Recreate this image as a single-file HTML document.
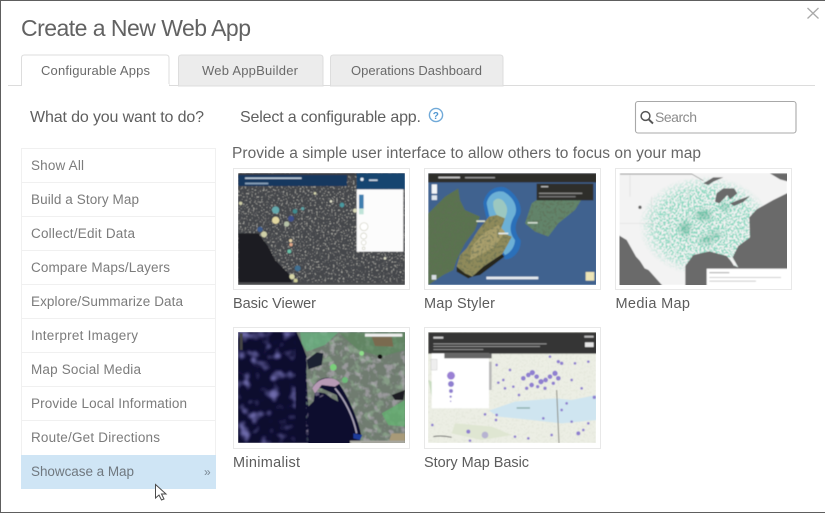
<!DOCTYPE html>
<html><head><meta charset="utf-8"><title>Create a New Web App</title>
<style>
html,body{margin:0;padding:0;background:#fff;width:825px;height:513px;overflow:hidden}
svg{display:block}
text{font-family:"Liberation Sans",sans-serif;fill:#6a6a6a}
</style></head><body>
<svg width="825" height="513" viewBox="0 0 825 513" xmlns="http://www.w3.org/2000/svg">
<defs>
<filter id="b" x="0" y="0" width="100%" height="100%"><feGaussianBlur stdDeviation=".6"/></filter>
<filter id="b3" x="-30%" y="-30%" width="160%" height="160%"><feGaussianBlur stdDeviation="9"/></filter>
<filter id="t" x="-2%" y="-2%" width="104%" height="104%"><feGaussianBlur stdDeviation=".22"/></filter>
<filter id="spkCream" x="0" y="0" width="100%" height="100%"><feTurbulence type="fractalNoise" baseFrequency=".6" numOctaves="2" seed="4"/><feColorMatrix values="0 0 0 0 .8 0 0 0 0 .78 0 0 0 0 .68 10 0 0 0 -6"/></filter>
<filter id="spkGreen" x="0" y="0" width="100%" height="100%"><feTurbulence type="fractalNoise" baseFrequency=".5" numOctaves="2" seed="9"/><feColorMatrix values="0 0 0 0 .25 0 0 0 0 .68 0 0 0 0 .52 8 0 0 0 -3.6"/></filter>
<filter id="spkPur" x="0" y="0" width="100%" height="100%"><feTurbulence type="fractalNoise" baseFrequency=".1" numOctaves="2" seed="12"/><feColorMatrix values="0 0 0 0 .33 0 0 0 0 .31 0 0 0 0 .78 4 0 0 0 -2.05"/><feGaussianBlur stdDeviation="1.2"/></filter>
<filter id="spkLandG" x="0" y="0" width="100%" height="100%"><feTurbulence type="fractalNoise" baseFrequency=".11" numOctaves="3" seed="21"/><feColorMatrix values="0 0 0 0 .36 0 0 0 0 .58 0 0 0 0 .36 5 0 0 0 -2.6"/></filter>
<filter id="spkLandM" x="0" y="0" width="100%" height="100%"><feTurbulence type="fractalNoise" baseFrequency=".14" numOctaves="3" seed="33"/><feColorMatrix values="0 0 0 0 .56 0 0 0 0 .48 0 0 0 0 .58 5 0 0 0 -2.6"/></filter>
<filter id="spkMtn" x="0" y="0" width="100%" height="100%"><feTurbulence type="fractalNoise" baseFrequency=".35" numOctaves="3" seed="5"/><feColorMatrix values="0 0 0 0 .12 0 0 0 0 .15 0 0 0 0 .09 6 0 0 0 -3"/></filter>
<filter id="spkRoad" x="0" y="0" width="100%" height="100%"><feTurbulence type="fractalNoise" baseFrequency=".5" numOctaves="2" seed="2"/><feColorMatrix values="0 0 0 0 .74 0 0 0 0 .77 0 0 0 0 .68 6 0 0 0 -3.1"/></filter>
<radialGradient id="gm"><stop offset="0" stop-color="#fff"/><stop offset=".72" stop-color="#eee"/><stop offset="1" stop-color="#000"/></radialGradient>
<mask id="mUS" maskUnits="userSpaceOnUse" x="600" y="160" width="200" height="140"><ellipse cx="705" cy="226" rx="66" ry="50" fill="url(#gm)"/></mask>
<clipPath id="c1"><rect x="238" y="173" width="167" height="112"/></clipPath>
<clipPath id="c2"><rect x="428" y="173" width="168" height="112"/></clipPath>
<clipPath id="c3"><rect x="619.5" y="173" width="167.5" height="112"/></clipPath>
<clipPath id="c4"><rect x="238" y="332" width="167" height="111"/></clipPath>
<clipPath id="c5"><rect x="428" y="332" width="168" height="111"/></clipPath>
<clipPath id="stylerLand" clipPathUnits="userSpaceOnUse"><path transform="translate(415 160) scale(.3333)" d="M40 160L90 110 130 85 135 120 150 150 195 170 180 210 150 250 125 300 115 330 85 345 40 375zM155 265L190 210 222 170 245 165 270 175 255 215 290 230 280 250 262 282 235 300 205 320 172 350 150 340 125 320 135 285zM330 190L350 130 400 95 470 75 505 110 480 150 430 190 400 230 360 215z"/></clipPath>
</defs>

<rect width="825" height="513" fill="#fff"/>
<path d="M.5 513V.5H825" fill="none" stroke="#5e5e5e" stroke-width="1"/>
<rect x="0" y="512" width="825" height="1" fill="#5e5e5e"/>

<g filter="url(#t)">
<text x="21" y="36" font-size="23" textLength="230" lengthAdjust="spacing" style="fill:#626262">Create a New Web App</text>
<path d="M807.5 8L818.5 18.5M818.5 8L807.5 18.5" stroke="#a9a9a9" stroke-width="1.3" fill="none"/>
<rect x="8" y="85" width="807" height="1" fill="#dcdcdc"/>
<path d="M178.5 86V58q0-3 3-3H320q3 0 3 3V86z" fill="#ececec" stroke="#dddddd"/>
<path d="M330.5 86V58q0-3 3-3H500q3 0 3 3V86z" fill="#ececec" stroke="#dddddd"/>
<path d="M21.5 86V58q0-3 3-3H166q3 0 3 3V86" fill="#fff" stroke="#dddddd"/>
<rect x="22" y="84" width="147" height="3" fill="#fff"/>
<text x="41" y="75" font-size="13" textLength="109">Configurable Apps</text>
<text x="202" y="75" font-size="13" textLength="96">Web AppBuilder</text>
<text x="351" y="75" font-size="13" textLength="131">Operations Dashboard</text>

<text x="30" y="122" font-size="16" textLength="174" style="fill:#5f5f5f">What do you want to do?</text>
<text x="240" y="122" font-size="16" textLength="181" style="fill:#5f5f5f">Select a configurable app.</text>
<circle cx="436" cy="115" r="6.6" fill="#fff" stroke="#6fa9d8" stroke-width="1.4"/>
<text x="432.8" y="119" font-size="10" style="fill:#4f95d0;font-weight:bold">?</text>

<rect x="635.5" y="101.5" width="160.5" height="31.5" rx="2.5" fill="#fff" stroke="#a8a8a8" stroke-width="1.1"/>
<circle cx="645.5" cy="116" r="4.4" fill="none" stroke="#555" stroke-width="1.5"/>
<path d="M648.8 119.5L653 123.5" stroke="#555" stroke-width="1.9"/>
<text x="655" y="122" font-size="14" textLength="42" style="fill:#8c8c8c">Search</text>

<text x="232" y="158" font-size="15.5" textLength="469" style="fill:#666">Provide a simple user interface to allow others to focus on your map</text>

<rect x="21.5" y="148.5" width="194" height="340" fill="#fff" stroke="#f0f0f0"/>
<g fill="#f0f0f0">
<rect x="21" y="182" width="195" height="1"/><rect x="21" y="216" width="195" height="1"/><rect x="21" y="250" width="195" height="1"/>
<rect x="21" y="284" width="195" height="1"/><rect x="21" y="318" width="195" height="1"/><rect x="21" y="352" width="195" height="1"/>
<rect x="21" y="386" width="195" height="1"/><rect x="21" y="420" width="195" height="1"/>
</g>
<rect x="21" y="455" width="195" height="34" fill="#cfe5f5"/>
<g font-size="13.5">
<text x="31" y="170" textLength="53" style="fill:#7b7b7b">Show All</text>
<text x="31" y="204" textLength="108" style="fill:#7b7b7b">Build a Story Map</text>
<text x="31" y="238" textLength="104" style="fill:#7b7b7b">Collect/Edit Data</text>
<text x="31" y="272" textLength="139" style="fill:#7b7b7b">Compare Maps/Layers</text>
<text x="31" y="306" textLength="152" style="fill:#7b7b7b">Explore/Summarize Data</text>
<text x="31" y="340" textLength="107" style="fill:#7b7b7b">Interpret Imagery</text>
<text x="31" y="374" textLength="110" style="fill:#7b7b7b">Map Social Media</text>
<text x="31" y="408" textLength="156" style="fill:#7b7b7b">Provide Local Information</text>
<text x="31" y="442" textLength="129" style="fill:#7b7b7b">Route/Get Directions</text>
<text x="31" y="476" textLength="103" style="fill:#70787f">Showcase a Map</text>
<text x="204" y="476" font-size="12" style="fill:#7a8894">»</text>
</g>

<g font-size="14.5">
<text x="233" y="308" textLength="83" style="fill:#5c5c5c">Basic Viewer</text>
<text x="424" y="308" textLength="71" style="fill:#5c5c5c">Map Styler</text>
<text x="615.5" y="308" textLength="74.5" style="fill:#5c5c5c">Media Map</text>
<text x="233" y="467" textLength="67" style="fill:#5c5c5c">Minimalist</text>
<text x="424" y="467" textLength="105" style="fill:#5c5c5c">Story Map Basic</text>
</g>
</g>

<g fill="#fff" stroke="#e8e8e8">
<rect x="233.5" y="168.5" width="176" height="121"/>
<rect x="424.5" y="168.5" width="176" height="121"/>
<rect x="615.5" y="168.5" width="176" height="121"/>
<rect x="233.5" y="327.5" width="176" height="121"/>
<rect x="424.5" y="327.5" width="176" height="121"/>
</g>

<!-- Basic Viewer -->
<g clip-path="url(#c1)"><g filter="url(#b)">
<rect x="238" y="173" width="167" height="112" fill="#45464b"/>
<rect x="238" y="173" width="167" height="112" filter="url(#spkCream)" opacity=".6"/>
<g transform="translate(225 160) scale(.3333)">
<path d="M40 220H100L130 260 150 300 190 340 205 375H40z" fill="#1b1b20"/>
<rect x="40" y="40" width="500" height="6" fill="#3b3c42"/>
<rect x="40" y="45" width="326" height="33" fill="#15395f"/>
<rect x="395" y="40" width="145" height="48" fill="#174470"/>
<rect x="395" y="88" width="140" height="187" fill="#fcfcfc"/>
<rect x="402" y="104" width="14" height="42" fill="#3f7fb0"/>
<rect x="402" y="146" width="14" height="17" fill="#bfe3d8"/>
<circle cx="417" cy="200" r="12" fill="#fff" stroke="#cfcfc0" stroke-width="2"/>
<circle cx="416" cy="228" r="9" fill="#fff" stroke="#cfcfc0" stroke-width="2"/>
<circle cx="416" cy="248" r="7" fill="#fff" stroke="#cfcfc0" stroke-width="2"/>
<circle cx="416" cy="265" r="4" fill="#fff" stroke="#cfcfc0" stroke-width="2"/>
<rect x="60" y="52" width="170" height="5" fill="#b8c7d6"/>
<rect x="60" y="68" width="70" height="5" fill="#8ea6bd"/>
<rect x="432" y="58" width="26" height="5" fill="#c5d3e0"/>
<circle cx="411" cy="58" r="5" fill="#e4edf4"/>
<circle cx="152" cy="150" r="11" fill="#63a9ad"/>
<circle cx="152" cy="181" r="11" fill="#e2d7a0"/>
<circle cx="185" cy="192" r="8" fill="#b7c2a8"/>
<circle cx="210" cy="154" r="7" fill="#3f8b8f"/>
<circle cx="233" cy="146" r="5" fill="#5fa3a5"/>
<circle cx="117" cy="223" r="9" fill="#cfd0a8"/>
<circle cx="105" cy="208" r="8" fill="#3b5c90"/>
<circle cx="198" cy="176" r="9" fill="#3c4f8c"/>
<circle cx="351" cy="135" r="7" fill="#4a9aa0"/>
<circle cx="47" cy="130" r="5" fill="#cfcfa8"/>
<circle cx="197" cy="242" r="5" fill="#e8d5a8"/>
<circle cx="193" cy="274" r="6" fill="#69c0a8"/>
<circle cx="198" cy="254" r="5" fill="#e2a888"/>
<circle cx="218" cy="325" r="9" fill="#3f6f92"/>
<circle cx="201" cy="350" r="8" fill="#d8d8a8"/>
<circle cx="212" cy="362" r="6" fill="#cfcf9a"/>
<circle cx="390" cy="152" r="6" fill="#d8d8b8"/>
<circle cx="318" cy="124" r="4" fill="#e0e0c8"/>
<circle cx="270" cy="100" r="4" fill="#d8d8b0"/>
<circle cx="480" cy="295" r="4" fill="#e0e0c8"/>
<rect x="40" y="367" width="500" height="8" fill="#4c4d50"/>
</g>
</g></g>

<!-- Map Styler -->
<g clip-path="url(#c2)"><g filter="url(#b)">
<g transform="translate(415 160) scale(.3333)">
<rect x="40" y="40" width="505" height="335" fill="#3f628f"/>
<path d="M40 160L90 110 130 85 135 120 150 150 195 170 180 210 150 250 125 300 115 330 85 345 40 375z" fill="#5a7350"/>
<path d="M205 130C210 100 235 75 270 82 305 100 325 140 315 165 300 190 295 215 317 240 320 270 295 300 270 298 250 260 215 200 205 130z" fill="#2b6fba"/>
<path d="M215 130C220 105 240 90 265 95 295 110 310 140 300 165 285 190 280 215 300 240 300 260 285 280 270 285 250 255 225 190 215 130z" fill="#6cb0d6"/>
<path d="M235 125C245 110 262 115 270 130 285 150 270 175 262 190 248 170 232 150 235 125z" fill="#9cc8c0"/>
<path d="M155 265L190 210 222 170 245 165 270 175 255 215 290 230 280 250 262 282 235 300 205 320 172 350 150 340 125 320 135 285z" fill="#8f8a5a"/>
<path d="M205 220L250 195 270 215 240 260 195 285 165 300 170 260z" fill="#a99f6c"/>
<path d="M330 190L350 130 400 95 470 75 505 110 480 150 430 190 400 230 360 215z" fill="#62846a"/>
</g>
<g clip-path="url(#stylerLand)"><rect x="428" y="173" width="168" height="112" filter="url(#spkMtn)" opacity=".55"/></g>
<g transform="translate(415 160) scale(.3333)">
<path d="M172 350L205 320 235 300 262 282 268 290 235 315 195 345z" fill="#26261c"/>
<path d="M125 320L150 340 172 350 160 355 125 335z" fill="#2a2a1e"/>
<path d="M40 40H545V67H40z" fill="#2d2d2b"/>
<rect x="365" y="71" width="170" height="50" fill="#2e2e2c"/>
<rect x="372" y="98" width="130" height="4" fill="#8b8b88"/>
<rect x="372" y="108" width="110" height="4" fill="#777"/>
<rect x="378" y="78" width="22" height="4" fill="#bbb"/>
<rect x="70" y="50" width="65" height="5" fill="#cfcfcf"/>
<rect x="150" y="51" width="90" height="4" fill="#9c9c9c"/>
<rect x="50" y="73" width="16" height="28" fill="#f4f6f8"/>
<rect x="50" y="106" width="16" height="14" fill="#dfe6ee"/>
<rect x="50" y="345" width="14" height="14" fill="#d9dfe4"/>
<rect x="512" y="336" width="26" height="26" fill="#ece4b6"/>
<rect x="214" y="350" width="156" height="8" fill="#e8ecf0"/>
<rect x="184" y="181" width="26" height="5" fill="#d9dfd0"/>
<rect x="338" y="186" width="30" height="5" fill="#cdd8cc"/>
<rect x="250" y="218" width="30" height="5" fill="#e8ece8"/>
</g>
</g></g>

<!-- Media Map -->
<g clip-path="url(#c3)"><g filter="url(#b)">
<rect x="619" y="173" width="168" height="112" fill="#f3f3f3"/>
<g transform="translate(610 160) scale(.3333)">
<path d="M30 44H250M60 45V110M30 190H180M125 110V220M180 110V260M235 80V260M300 130V270" stroke="#dedede" stroke-width="2" fill="none"/>
</g>
<rect x="619" y="173" width="168" height="112" filter="url(#spkGreen)" mask="url(#mUS)"/>
<g transform="translate(610 160) scale(.3333)">
<g fill="#2f9c78" opacity=".5" filter="url(#b3)">
<ellipse cx="225" cy="205" rx="16" ry="20"/><ellipse cx="288" cy="240" rx="20" ry="10"/><ellipse cx="318" cy="225" rx="15" ry="9"/><ellipse cx="280" cy="165" rx="24" ry="14"/><ellipse cx="345" cy="140" rx="14" ry="10"/>
</g>
<g fill="#6a6a6a">
<path d="M535 98L490 120 440 148 418 172 420 232 385 258 368 292 385 322 375 318 350 288 298 274 250 285 226 318 226 380H535z"/>
<path d="M25 225L50 240 78 290 120 335 160 380H25z"/>
<path d="M280 70L310 52 340 52 310 65 295 75z"/>
<path d="M320 100L340 85 372 85 382 100 360 118 352 105 328 130 315 125z"/>
<path d="M360 130L390 118 420 108 400 126 372 138z"/>
<path d="M480 40H535V65L510 58z"/>
</g>
<path d="M72 262L92 285 120 332 104 325 82 290z" fill="#f3f3f3"/>
<path d="M362 290L378 312 372 318 360 298z" fill="#f3f3f3"/>
<path d="M30 42H245L280 62" stroke="#8a8a8a" stroke-width="2" fill="none"/>
<rect x="290" y="326" width="245" height="54" fill="#fff"/>
<rect x="298" y="336" width="60" height="4" fill="#bbb"/>
<rect x="298" y="351" width="215" height="3" fill="#ccc"/>
<rect x="298" y="362" width="140" height="3" fill="#ccc"/>
<circle cx="90" cy="142" r="5" fill="#666"/>
</g>
</g></g>

<!-- Minimalist -->
<g clip-path="url(#c4)"><g filter="url(#b)">
<rect x="238" y="332" width="167" height="111" fill="#0b0a2e"/>
<rect x="238" y="332" width="58" height="111" filter="url(#spkPur)" opacity=".7"/>
<g transform="translate(225 320) scale(.3333)">
<path d="M215 37H545V375H410L400 345 375 300 340 250 300 220 270 215 265 250 250 260 245 180 245 110 230 70z" fill="#6f7b70"/>
</g>
<rect x="306" y="332" width="99" height="111" filter="url(#spkLandG)" opacity=".45"/>
<rect x="306" y="332" width="99" height="111" filter="url(#spkLandM)" opacity=".5"/>
<g transform="translate(225 320) scale(.3333)">
<path d="M225 37H340L300 75 245 95 230 70z" fill="#69b080" opacity=".8"/>
<path d="M340 37H540V90L470 110 400 90z" fill="#5d8a60" opacity=".7"/>
<path d="M440 50H500L505 80 450 78z" fill="#7a6a50"/>
<path d="M245 120L275 97 295 100 290 135 250 148z" fill="#1b2030"/>
<path d="M265 200C285 165 325 165 345 195 375 240 400 300 410 350L372 375H250L250 260 270 240 300 225 340 245 335 225 290 205z" fill="#0b0a2e"/>
<path d="M262 205C280 170 325 165 345 190L330 200 290 195 270 220z" fill="#b79ab5"/>
<path d="M330 205C360 240 385 290 395 340" stroke="#a9a3b8" stroke-width="5" fill="none"/>
<path d="M385 340L412 345 405 360 385 355z" fill="#1a3a9a"/>
<circle cx="325" cy="142" r="10" fill="#7ad07a"/><circle cx="360" cy="180" r="9" fill="#6dbb7a"/><circle cx="410" cy="100" r="7" fill="#8fe08a"/>
<path d="M470 280L540 240V320L490 315z" fill="#64b070" opacity=".8"/>
<path d="M500 225L540 210 535 240 510 240z" fill="#1a1a20"/>
<path d="M500 340H540V370H490z" fill="#a89a78"/>
<circle cx="465" cy="110" r="7" fill="#111"/>
<rect x="420" y="41" width="112" height="9" fill="#f0f0f0"/>
<rect x="44" y="40" width="9" height="50" fill="#444"/>
<rect x="375" y="362" width="165" height="8" fill="#a8a8a0"/>
</g>
</g></g>

<!-- Story Map Basic -->
<g clip-path="url(#c5)"><g filter="url(#b)">
<rect x="428" y="332" width="168" height="111" fill="#eceee4"/>
<rect x="428" y="332" width="168" height="111" filter="url(#spkRoad)" opacity=".6"/>
<g transform="translate(415 320) scale(.3333)">
<path d="M222 272L300 245 420 235 470 240 545 225V300L440 310 350 300 250 290z" fill="#cfe5f0"/>
<path d="M40 180L70 195 85 240 50 230z" fill="#c8dcc0"/>
<path d="M120 310L230 320 290 345 200 360 110 340z" fill="#dfe6d2"/>
<path d="M425 210L432 370" stroke="#8a8a80" stroke-width="3" fill="none"/>
<rect x="40" y="37" width="505" height="64" fill="#353535"/>
<rect x="55" y="50" width="30" height="6" fill="#cfcfcf"/>
<rect x="55" y="70" width="340" height="3" fill="#9c9c9c"/>
<rect x="55" y="78" width="320" height="3" fill="#8f8f8f"/>
<rect x="55" y="87" width="150" height="3" fill="#8f8f8f"/>
<rect x="510" y="67" width="26" height="14" fill="#e5e5e5"/>
<rect x="508" y="47" width="28" height="6" fill="#bbb"/>
<rect x="50" y="100" width="172" height="165" fill="#fff"/>
<rect x="222" y="125" width="8" height="85" fill="#b9b9b9"/>
<rect x="88" y="100" width="142" height="15" fill="#666"/>
<rect x="48" y="118" width="18" height="32" fill="#eee" stroke="#bbb"/>
<g fill="#8f7fd0">
<circle cx="108" cy="167" r="12" fill="#9a80d4"/><circle cx="108" cy="192" r="9"/><circle cx="108" cy="213" r="6"/><circle cx="107" cy="230" r="3.5"/><circle cx="107" cy="244" r="2"/>
<circle cx="210" cy="345" r="10" opacity=".5"/>
<circle cx="325" cy="175" r="7"/><circle cx="340" cy="165" r="7"/><circle cx="352" cy="158" r="8"/><circle cx="365" cy="170" r="7"/><circle cx="378" cy="185" r="8"/><circle cx="392" cy="180" r="7"/><circle cx="405" cy="170" r="7"/><circle cx="420" cy="160" r="8"/><circle cx="430" cy="175" r="7"/><circle cx="350" cy="195" r="7"/><circle cx="335" cy="205" r="5"/><circle cx="368" cy="200" r="5"/><circle cx="390" cy="205" r="5"/><circle cx="415" cy="190" r="5"/><circle cx="440" cy="130" r="5"/><circle cx="430" cy="125" r="5"/><circle cx="405" cy="110" r="4"/><circle cx="470" cy="180" r="4"/><circle cx="500" cy="205" r="4"/><circle cx="538" cy="232" r="5"/><circle cx="480" cy="130" r="4"/><circle cx="520" cy="125" r="4"/>
<circle cx="265" cy="180" r="4"/><circle cx="250" cy="188" r="4"/><circle cx="295" cy="200" r="4"/><circle cx="285" cy="150" r="4"/><circle cx="245" cy="135" r="4"/><circle cx="270" cy="205" r="4"/><circle cx="312" cy="225" r="4"/><circle cx="245" cy="285" r="4"/><circle cx="243" cy="300" r="4"/><circle cx="210" cy="283" r="4"/><circle cx="385" cy="295" r="4"/><circle cx="160" cy="335" r="6"/><circle cx="52" cy="315" r="4"/><circle cx="165" cy="362" r="4"/><circle cx="300" cy="350" r="4"/><circle cx="340" cy="355" r="4"/><circle cx="490" cy="340" r="6"/><circle cx="505" cy="330" r="4"/><circle cx="470" cy="305" r="4"/><circle cx="520" cy="310" r="4"/><circle cx="410" cy="345" r="4"/><circle cx="455" cy="250" r="4"/><circle cx="440" cy="270" r="4"/>
</g>
<rect x="305" y="262" width="40" height="4" fill="#8aa"/>
<path d="M55 350Q80 345 110 352" stroke="#666" stroke-width="3" fill="none"/>
</g>
</g></g>

<path d="M155.5 484.5V498L159 495 161.5 500 164 499 161.5 494 166 494z" fill="#fff" stroke="#4a4a4a" stroke-width="1"/>
</svg>
</body></html>
